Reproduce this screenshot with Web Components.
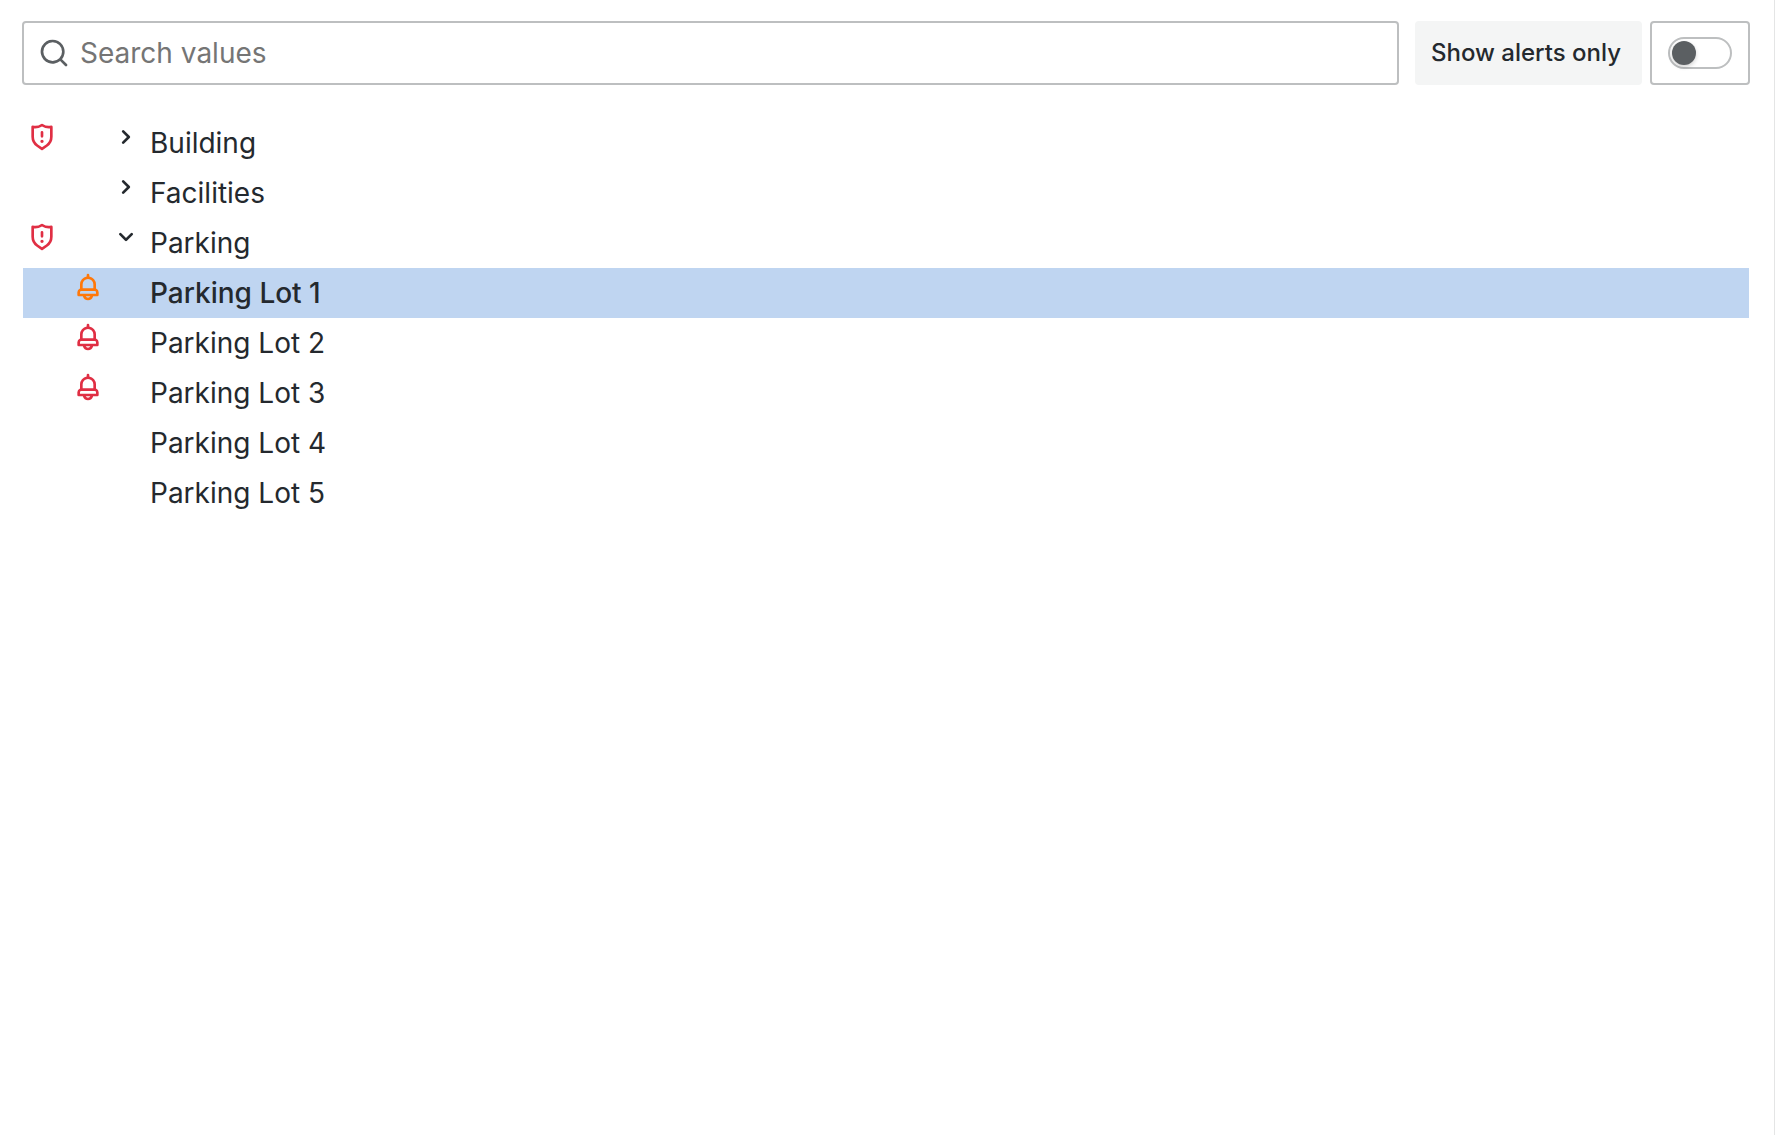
<!DOCTYPE html>
<html lang="en">
<head>
<meta charset="utf-8">
<title>Asset tree</title>
<style>
  html { height: 100%; }
  body {
    margin: 0;
    min-height: 100%;
    box-sizing: border-box;
    background: #fff;
    color: #24292e;
    font-family: Inter, "Liberation Sans", sans-serif;
    font-size: 28px;
    line-height: 50px;
    border-right: 1px solid #e4e5e5;
  }
</style>
</head>
<body>
<tree-panel></tree-panel>

<script>
const ICONS = {
  search: 'M21.71,20.29,18,16.61A9,9,0,1,0,16.61,18l3.68,3.68a1,1,0,0,0,1.42,0A1,1,0,0,0,21.71,20.29ZM11,18a7,7,0,1,1,7-7A7,7,0,0,1,11,18Z',
  right: 'M14.83,11.29,10.59,7.05a1,1,0,0,0-1.42,0,1,1,0,0,0,0,1.41L12.71,12,9.17,15.54a1,1,0,0,0,0,1.41,1,1,0,0,0,.71.29,1,1,0,0,0,.71-.29l4.24-4.24A1,1,0,0,0,14.83,11.29Z',
  down: 'M17,9.17a1,1,0,0,0-1.41,0L12,12.71,8.46,9.17a1,1,0,0,0-1.41,0,1,1,0,0,0,0,1.42l4.24,4.24a1,1,0,0,0,1.42,0L17,10.59A1,1,0,0,0,17,9.17Z',
  shield: 'M12,14a1.25,1.25,0,1,0,1.25,1.25A1.25,1.25,0,0,0,12,14Zm0-1.5a1,1,0,0,0,1-1v-3a1,1,0,0,0-2,0v3A1,1,0,0,0,12,12.5ZM19.63,3.65a1,1,0,0,0-.84-.2,8,8,0,0,1-6.22-1.27,1,1,0,0,0-1.14,0A8,8,0,0,1,5.21,3.45a1,1,0,0,0-.84.2A1,1,0,0,0,4,4.43v7.45a9,9,0,0,0,3.77,7.33l3.65,2.6a1,1,0,0,0,1.16,0l3.65-2.6A9,9,0,0,0,20,11.88V4.43A1,1,0,0,0,19.63,3.65ZM18,11.88a7,7,0,0,1-2.93,5.7L12,19.77,8.93,17.58A7,7,0,0,1,6,11.88V5.58a10,10,0,0,0,6-1.39,10,10,0,0,0,6,1.39Z',
  bell: 'M18,13.18V10a6,6,0,0,0-5-5.91V3a1,1,0,0,0-2,0V4.09A6,6,0,0,0,6,10v3.18A3,3,0,0,0,4,16v2a1,1,0,0,0,1,1H8.14a4,4,0,0,0,7.72,0H19a1,1,0,0,0,1-1V16A3,3,0,0,0,18,13.18ZM8,10a4,4,0,0,1,8,0v3H8Zm4,10a2,2,0,0,1-1.72-1h3.44A2,2,0,0,1,12,20Zm6-3H6V16a1,1,0,0,1,1-1H17a1,1,0,0,1,1,1Z'
};

class UiIcon extends HTMLElement {
  connectedCallback() {
    if (this.shadowRoot) return;
    this.attachShadow({ mode: 'open' }).innerHTML = `
      <style>
        :host { display: block; width: 32px; height: 32px; flex: none; }
        svg { display: block; width: 100%; height: 100%; fill: currentColor; }
      </style>
      <svg viewBox="0 0 24 24" aria-hidden="true"><path d="${ICONS[this.getAttribute('name')]}"/></svg>`;
  }
}
customElements.define('ui-icon', UiIcon);

class SearchField extends HTMLElement {
  connectedCallback() {
    if (this.shadowRoot) return;
    this.attachShadow({ mode: 'open' }).innerHTML = `
      <style>
        :host { display: block; }
        label {
          display: flex; align-items: center; gap: 10px;
          box-sizing: border-box; height: 64px; padding: 0 14px;
          border: 2px solid #bdbfc0; border-radius: 4px; background: #fff;
        }
        ui-icon { color: #5b5f62; }
        input {
          flex: 1; min-width: 0; height: 56px; padding: 0; border: 0; outline: 0;
          background: transparent; color: inherit; font: inherit;
        }
        input::placeholder { color: #757575; opacity: 1; }
      </style>
      <label><ui-icon name="search"></ui-icon><input type="text" aria-label="Search values" placeholder="Search values"></label>`;
  }
}
customElements.define('search-field', SearchField);

class InlineSwitch extends HTMLElement {
  connectedCallback() {
    if (this.shadowRoot) return;
    this.attachShadow({ mode: 'open' }).innerHTML = `
      <style>
        :host { display: flex; gap: 8px; }
        label {
          display: flex; align-items: center; box-sizing: border-box;
          min-width: 227px; height: 64px; padding: 0 16px;
          border-radius: 4px; background: #f4f5f5;
          font-size: 24px; font-weight: 500; white-space: nowrap;
        }
        .box {
          display: flex; align-items: center; box-sizing: border-box;
          height: 64px; padding: 0 16px;
          border: 2px solid #bdbfc0; border-radius: 4px; background: #fff;
        }
        input {
          appearance: none; display: flex; align-items: center; box-sizing: border-box;
          width: 64px; height: 32px; margin: 0; padding: 0 2px;
          border: 2px solid #bdbfc0; border-radius: 16px; background: #fff;
        }
        input::before {
          content: ""; width: 24px; height: 24px; border-radius: 50%;
          background: #5b5f62; box-shadow: 0 2px 4px rgba(24, 26, 27, .2);
        }
        input:checked { justify-content: flex-end; background: #3871dc; }
        input:checked::before { background: #fff; }
      </style>
      <label for="toggle"><slot></slot></label>
      <div class="box"><input type="checkbox" role="switch" id="toggle"></div>`;
  }
}
customElements.define('inline-switch', InlineSwitch);

class TreeRow extends HTMLElement {
  connectedCallback() {
    if (this.shadowRoot) return;
    const group = this.getAttribute('group');
    const own = this.getAttribute('alert');
    const state = this.getAttribute('state');
    this.attachShadow({ mode: 'open' }).innerHTML = `
      <style>
        :host { display: block; }
        button {
          display: grid; grid-template-columns: 46px 38px 40px 1fr;
          width: 100%; height: 50px; margin: 0; padding: 0 0 0 3px;
          border: 0; background: transparent; color: inherit; font: inherit;
          text-align: left; cursor: pointer;
        }
        .cell { padding-top: 3px; }
        .critical { color: #e02f44; }
        .warning { color: #ff780a; }
        :host([selected]) button { background: #bfd5f1; font-weight: 500; }
      </style>
      <button type="button">
        <span class="cell critical">${group ? '<ui-icon name="shield"></ui-icon>' : ''}</span>
        <span class="cell ${own || ''}">${own ? '<ui-icon name="bell"></ui-icon>' : ''}</span>
        <span class="cell">${state ? `<ui-icon name="${state === 'open' ? 'down' : 'right'}"></ui-icon>` : ''}</span>
        <span><slot></slot></span>
      </button>`;
    if (state) this.shadowRoot.querySelector('button').setAttribute('aria-expanded', state === 'open');
  }
}
customElements.define('tree-row', TreeRow);

class TreePanel extends HTMLElement {
  connectedCallback() {
    if (this.shadowRoot) return;
    this.attachShadow({ mode: 'open' }).innerHTML = `
      <style>
        :host { display: flex; flex-direction: column; gap: 33px; padding: 21px 24px 21px 22px; }
        header { display: flex; gap: 16px; }
        search-field { flex: 1; min-width: 0; }
        main { padding: 0 1px; }
      </style>
      <header>
        <search-field></search-field>
        <inline-switch>Show alerts only</inline-switch>
      </header>
      <main>
        <tree-row group="critical" state="closed">Building</tree-row>
        <tree-row state="closed">Facilities</tree-row>
        <tree-row group="critical" state="open">Parking</tree-row>
        <tree-row alert="warning" selected>Parking Lot 1</tree-row>
        <tree-row alert="critical">Parking Lot 2</tree-row>
        <tree-row alert="critical">Parking Lot 3</tree-row>
        <tree-row>Parking Lot 4</tree-row>
        <tree-row>Parking Lot 5</tree-row>
      </main>`;
  }
}
customElements.define('tree-panel', TreePanel);
</script>
</body>
</html>
